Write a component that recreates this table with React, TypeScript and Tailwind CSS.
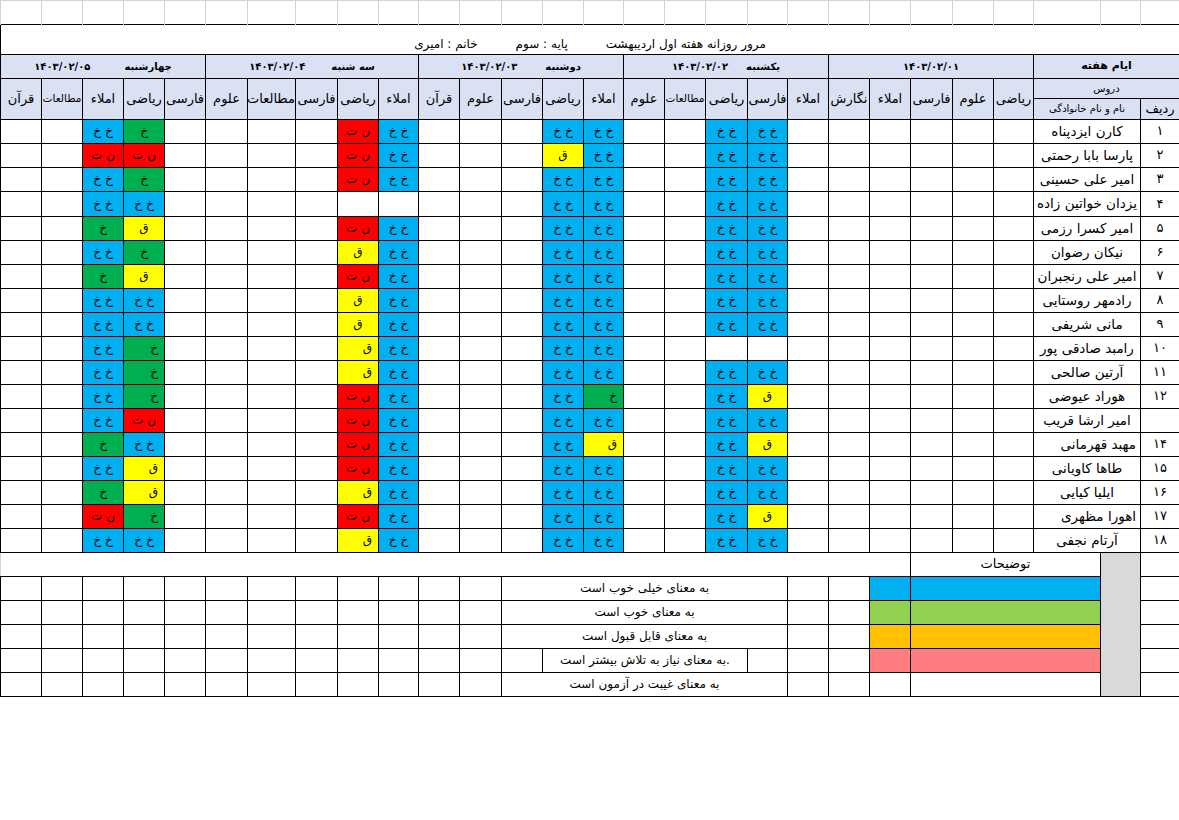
import React from 'react';

type Day = { name: string; date: string; gap: string; subjects: string[] };

const days: Day[] = [
  { name: '', date: '۱۴۰۳/۰۲/۰۱', gap: 'gap-0', subjects: ['ریاضی', 'علوم', 'فارسی', 'املاء', 'نگارش'] },
  { name: 'یکشنبه', date: '۱۴۰۳/۰۲/۰۲', gap: 'gap-[18px]', subjects: ['املاء', 'فارسی', 'ریاضی', 'مطالعات', 'علوم'] },
  { name: 'دوشنبه', date: '۱۴۰۳/۰۲/۰۳', gap: 'gap-[28px]', subjects: ['املاء', 'ریاضی', 'فارسی', 'علوم', 'قرآن'] },
  { name: 'سه شنبه', date: '۱۴۰۳/۰۲/۰۴', gap: 'gap-[26px]', subjects: ['املاء', 'ریاضی', 'فارسی', 'مطالعات', 'علوم'] },
  { name: 'چهارشنبه', date: '۱۴۰۳/۰۲/۰۵', gap: 'gap-[34px]', subjects: ['فارسی', 'ریاضی', 'املاء', 'مطالعات', 'قرآن'] },
];

// column widths, right to left
const cols = [
  'w-[39px]', 'w-[40px]', 'w-[67px]',
  'w-[40px]', 'w-[41px]', 'w-[42px]', 'w-[41px]', 'w-[41px]',
  'w-[41px]', 'w-[40px]', 'w-[42px]', 'w-[41px]', 'w-[41px]',
  'w-[40px]', 'w-[41px]', 'w-[41px]', 'w-[42px]', 'w-[41px]',
  'w-[40px]', 'w-[41px]', 'w-[42px]', 'w-[48px]', 'w-[42px]',
  'w-[41px]', 'w-[41px]', 'w-[41px]', 'w-[41px]', 'w-[41px]',
];

// grades: [day]-[subject] -> one letter per student
// B blue, G green, g green right, R red, Y yellow, y yellow right, _ empty
const grades: Record<string, string> = {
  '1-1': 'BBBBBBBBB_BYBYBBYB',
  '1-2': 'BBBBBBBBB_BBBBBBBB',
  '2-0': 'BBBBBBBBBBBgByBBBB',
  '2-1': 'BYBBBBBBBBBBBBBBBB',
  '3-0': 'BBB_BBBBBBBBBBBBBB',
  '3-1': 'RRR_RYRYYyyRRRRyRy',
  '4-1': 'GRGBYGYBBgggRByygB',
  '4-2': 'BRBBGBGBBBBBBGBGRB',
};

const marks: Record<string, { bg: string; text: string; align: string }> = {
  B: { bg: 'bg-[#00b0f0]', text: 'خ خ', align: 'text-center' },
  G: { bg: 'bg-[#00b050]', text: 'خ', align: 'text-center' },
  g: { bg: 'bg-[#00b050]', text: 'خ', align: 'text-right pr-[6px]' },
  R: { bg: 'bg-[#ff0000]', text: 'ن ت', align: 'text-center' },
  Y: { bg: 'bg-[#ffff00]', text: 'ق', align: 'text-center' },
  y: { bg: 'bg-[#ffff00]', text: 'ق', align: 'text-right pr-[6px]' },
};

const students = [
  { no: '۱', name: 'کارن ایزدپناه' },
  { no: '۲', name: 'پارسا بابا رحمتی' },
  { no: '۳', name: 'امیر علی حسینی' },
  { no: '۴', name: 'یزدان خواتین زاده' },
  { no: '۵', name: 'امیر کسرا رزمی' },
  { no: '۶', name: 'نیکان رضوان' },
  { no: '۷', name: 'امیر علی رنجبران' },
  { no: '۸', name: 'رادمهر روستایی' },
  { no: '۹', name: 'مانی شریفی' },
  { no: '۱۰', name: 'رامبد صادقی پور' },
  { no: '۱۱', name: 'آرتین صالحی' },
  { no: '۱۲', name: 'هوراد عیوضی' },
  { no: '', name: 'امیر ارشا قریب' },
  { no: '۱۴', name: 'مهبد قهرمانی', right: true },
  { no: '۱۵', name: 'طاها کاویانی' },
  { no: '۱۶', name: 'ایلیا کیایی' },
  { no: '۱۷', name: 'اهورا مظهری', right: true },
  { no: '۱۸', name: 'آرتام نجفی' },
];

const legend = [
  { color: 'bg-[#00b0f0]', text: 'به معنای خیلی خوب است' },
  { color: 'bg-[#92d050]', text: 'به معنای خوب است' },
  { color: 'bg-[#ffc000]', text: 'به معنای قابل قبول است' },
  { color: 'bg-[#ff7c80]', text: '.به معنای  نیاز به تلاش بیشتر است', split: true },
  { color: '', text: 'به معنای غیبت در آزمون است' },
];

const cell = 'border border-black p-0 align-middle text-center whitespace-nowrap overflow-hidden';
const head = 'bg-[#d9e1f2]';

function Blank({ n }: { n: number }) {
  return (
    <>
      {Array.from({ length: n }).map((_, i) => (
        <td key={i} className={cell} />
      ))}
    </>
  );
}

export default function App() {
  return (
    <div className="bg-white w-[1179px] h-[820px] font-['DejaVu_Sans',sans-serif] text-black">
      <table dir="rtl" className="table-fixed border-collapse w-[1179px]">
        <colgroup>
          {cols.map((c, i) => (
            <col key={i} className={c} />
          ))}
        </colgroup>
        <tbody>
          <tr className="h-[24px]">
            {cols.map((_, i) => (
              <td key={i} className="border-x border-t border-[#d4d4d4] p-0" />
            ))}
          </tr>

          <tr className="h-[30px]">
            <td colSpan={28} className="border border-black p-0 align-bottom">
              <div className="flex justify-center gap-[38px] pb-[4px] text-[12px] leading-none">
                <span>مرور روزانه هفته اول اردیبهشت</span>
                <span>پایه : سوم</span>
                <span>خانم : امیری</span>
              </div>
            </td>
          </tr>

          <tr className="h-[24px]">
            <td colSpan={3} className={`${cell} ${head} text-[11px] font-bold`}>ایام هفته</td>
            {days.map((d) => (
              <td key={d.date} colSpan={5} className={`${cell} ${head} text-[10px] font-bold`}>
                <div className={`flex justify-center items-center ${d.gap}`}>
                  {d.name && <span>{d.name}</span>}
                  <span dir="ltr">{d.date}</span>
                </div>
              </td>
            ))}
          </tr>

          <tr className="h-[20px]">
            <td colSpan={3} className={`${cell} ${head} text-[10px]`}>دروس</td>
            {days.map((d, di) =>
              d.subjects.map((s, j) => (
                <td
                  key={d.date + j}
                  rowSpan={2}
                  className={`${cell} ${head} ${s === 'مطالعات' && di !== 3 ? 'text-[10.5px]' : 'text-[13px]'}`}
                >
                  {s}
                </td>
              ))
            )}
          </tr>
          <tr className="h-[20px]">
            <td className={`${cell} ${head} text-[13px]`}>ردیف</td>
            <td colSpan={2} className={`${cell} ${head} text-[10px]`}>نام و نام خانوادگی</td>
          </tr>

          {students.map((st, r) => (
            <tr key={r} className={r === 3 ? 'h-[25px]' : 'h-[24px]'}>
              <td className={`${cell} text-[13px]`}>{st.no}</td>
              <td
                colSpan={2}
                className={`${cell} text-[13.5px] ${st.right ? 'text-right pr-[4px]' : ''}`}
              >
                {st.name}
              </td>
              {days.map((d, di) =>
                d.subjects.map((_, si) => {
                  const row = grades[`${di}-${si}`];
                  const m = row ? marks[row[r]] : undefined;
                  if (!m) return <td key={di + '-' + si} className={cell} />;
                  return (
                    <td key={di + '-' + si} className={`${cell} ${m.bg} ${m.align} text-[12px]`}>
                      {m.text}
                    </td>
                  );
                })
              )}
            </tr>
          ))}

          <tr className="h-[24px]">
            <td className={cell} />
            <td rowSpan={6} className="border border-black bg-[#d9d9d9] p-0" />
            <td colSpan={4} className={`${cell} text-[13px]`}>توضیحات</td>
            <td colSpan={22} className="border-y border-r border-black border-l border-l-[#d4d4d4] p-0" />
          </tr>

          {legend.map((l, i) => (
            <tr key={i} className="h-[24px]">
              <td className={cell} />
              <td colSpan={4} className={`${cell} ${l.color}`} />
              <td className={`${cell} ${l.color}`} />
              <Blank n={2} />
              {l.split ? (
                <>
                  <td className={cell} />
                  <td colSpan={5} className={`${cell} text-[12px]`}>{l.text}</td>
                  <td className={cell} />
                </>
              ) : (
                <td colSpan={7} className={`${cell} text-[12px]`}>{l.text}</td>
              )}
              <Blank n={12} />
            </tr>
          ))}
        </tbody>
      </table>
    </div>
  );
}
